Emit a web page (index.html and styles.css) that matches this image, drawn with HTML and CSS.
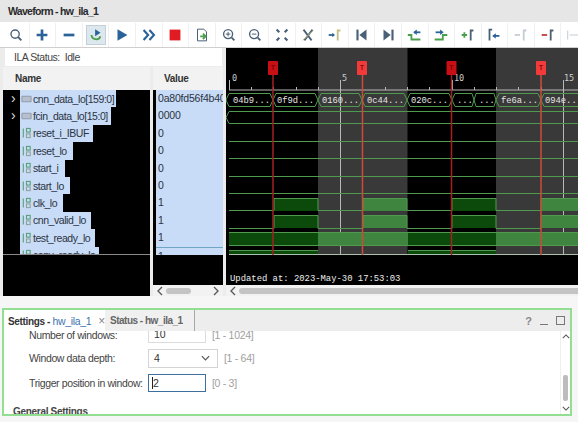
FILE: index.html
```html
<!DOCTYPE html>
<html lang="en">
<head>
<meta charset="utf-8">
<title>Waveform - hw_ila_1</title>
<link rel="stylesheet" href="styles.css">
</head>
<body>
<div class="app">
  <header class="title">Waveform - hw_ila_1</header>
  <div class="toolbar">
    <span class="tool"><svg viewBox="0 0 20 20"><circle cx="9" cy="9" r="4.6" class="s-slate"/><path d="M12.500 12.500L16 16" class="s-slate thick"/></svg></span>
    <span class="tool"><svg viewBox="0 0 20 20"><path d="M10 4v12M4 10h12" class="s-blue heavy"/></svg></span>
    <span class="tool"><svg viewBox="0 0 20 20"><path d="M4 10h12" class="s-blue heavy"/></svg></span>
    <span class="tool selected"><svg viewBox="0 0 20 20"><path d="M5 10a5.200 5.200 0 0 0 10 1.500" class="s-green thick"/><path d="M9 3.500l6 4-6 4z" class="f-blue"/></svg></span>
    <span class="tool"><svg viewBox="0 0 20 20"><path d="M5 3.500l11 6.500-11 6.500z" class="f-blue"/></svg></span>
    <span class="tool"><svg viewBox="0 0 20 20"><path d="M4 4.500l5 5.500-5 5.500M10.500 4.500l5 5.500-5 5.500" class="s-blue wide"/></svg></span>
    <span class="tool"><svg viewBox="0 0 20 20"><rect x="4" y="4" width="12" height="12" class="f-red"/></svg></span>
    <span class="tool"><svg viewBox="0 0 20 20"><path d="M5 3.500h7l3 3v10H5z" class="s-slate thin"/><path d="M8 11.500h4.500M11 8.500l3 3-3 3" class="s-green thick"/></svg></span>
    <span class="tool"><svg viewBox="0 0 20 20"><circle cx="9" cy="9" r="5" class="s-slate"/><path d="M13 13l3 3" class="s-slate thick"/><path d="M6.500 9h5M9 6.500v5" class="s-slate thin"/></svg></span>
    <span class="tool"><svg viewBox="0 0 20 20"><circle cx="9" cy="9" r="5" class="s-slate"/><path d="M13 13l3 3" class="s-slate thick"/><path d="M6.500 9h5" class="s-slate thin"/></svg></span>
    <span class="tool"><svg viewBox="0 0 20 20"><path d="M4 4l3 3M16 4l-3 3M4 16l3-3M16 16l-3-3" class="s-slate wide"/></svg></span>
    <span class="tool"><svg viewBox="0 0 20 20"><path d="M5 4l9 12M15 4L6 16" class="s-slate thick"/><path d="M4 16L16 5" class="s-gold thin"/></svg></span>
    <span class="tool"><svg viewBox="0 0 20 20"><path d="M3 10h5" class="s-blue thick"/><path d="M7 7.500l3 2.500-3 2.500z" class="f-blue"/><path d="M16 5h-3v11" class="s-gold thick"/></svg></span>
    <span class="tool"><svg viewBox="0 0 20 20"><path d="M5 4v12" class="s-slate wide"/><path d="M15 4v12l-8-6z" class="f-slate"/></svg></span>
    <span class="tool"><svg viewBox="0 0 20 20"><path d="M15 4v12" class="s-slate wide"/><path d="M5 4v12l8-6z" class="f-slate"/></svg></span>
    <span class="tool"><svg viewBox="0 0 20 20"><path d="M2 10h4v5h10" class="s-green thick"/><path d="M9 7h7" class="s-blue thick"/><path d="M12 4l-4 3 4 3z" class="f-blue"/></svg></span>
    <span class="tool"><svg viewBox="0 0 20 20"><path d="M3 15h9v-5h5" class="s-green thick"/><path d="M4 7h6" class="s-blue thick"/><path d="M9 4l4 3-4 3z" class="f-blue"/></svg></span>
    <span class="tool"><svg viewBox="0 0 20 20"><path d="M3 10h6M6 7v6" class="s-green thick"/><path d="M16 5h-3v11" class="s-slate thick"/></svg></span>
    <span class="tool"><svg viewBox="0 0 20 20"><path d="M8 4H5v12" class="s-slate thick"/><path d="M9 11h7" class="s-blue thick"/><path d="M12 8l-4 3 4 3z" class="f-blue"/></svg></span>
    <span class="tool"><svg viewBox="0 0 20 20"><path d="M3 10h6" class="s-pale thick"/><path d="M16 5h-3v11" class="s-pale thick"/></svg></span>
    <span class="tool"><svg viewBox="0 0 20 20"><path d="M3 10h6" class="s-red thick"/><path d="M16 5h-3v11" class="s-slate thick"/></svg></span>
    <span class="tool"><svg viewBox="0 0 20 20"><path d="M3 5v10M17 5v10M5 10h10" class="s-pale thin"/></svg></span>
  </div>

  <div class="main">
    <div class="left">
      <div class="status">ILA Status:&nbsp; Idle</div>
      <div class="columns">
        <div class="col-name">
          <div class="col-head">Name</div>
          <div class="tree">
            <div class="row"><span class="chev">&#x203A;</span><span class="sel w115"><svg class="sig" viewBox="0 0 12 12"><path d="M1 3h10v6H1z" class="bus-ico"/></svg>cnn_data_lo[159:0]</span></div>
            <div class="row"><span class="chev">&#x203A;</span><span class="sel w111"><svg class="sig" viewBox="0 0 12 12"><path d="M1 3h10v6H1z" class="bus-ico"/></svg>fcin_data_lo[15:0]</span></div>
            <div class="row"><span class="sel w93"><svg class="sig" viewBox="0 0 12 12"><path d="M2.500 1v10" class="bit-ico"/><rect x="6" y="1" width="4" height="4" class="bit-ico"/><rect x="6" y="7" width="4" height="4" class="bit-ico alt"/></svg>reset_i_IBUF</span></div>
            <div class="row"><span class="sel w73"><svg class="sig" viewBox="0 0 12 12"><path d="M2.500 1v10" class="bit-ico"/><rect x="6" y="1" width="4" height="4" class="bit-ico"/><rect x="6" y="7" width="4" height="4" class="bit-ico alt"/></svg>reset_lo</span></div>
            <div class="row"><span class="sel w65"><svg class="sig" viewBox="0 0 12 12"><path d="M2.500 1v10" class="bit-ico"/><rect x="6" y="1" width="4" height="4" class="bit-ico"/><rect x="6" y="7" width="4" height="4" class="bit-ico alt"/></svg>start_i</span></div>
            <div class="row"><span class="sel w70"><svg class="sig" viewBox="0 0 12 12"><path d="M2.500 1v10" class="bit-ico"/><rect x="6" y="1" width="4" height="4" class="bit-ico"/><rect x="6" y="7" width="4" height="4" class="bit-ico alt"/></svg>start_lo</span></div>
            <div class="row"><span class="sel w63"><svg class="sig" viewBox="0 0 12 12"><path d="M2.500 1v10" class="bit-ico"/><rect x="6" y="1" width="4" height="4" class="bit-ico"/><rect x="6" y="7" width="4" height="4" class="bit-ico alt"/></svg>clk_lo</span></div>
            <div class="row"><span class="sel w91"><svg class="sig" viewBox="0 0 12 12"><path d="M2.500 1v10" class="bit-ico"/><rect x="6" y="1" width="4" height="4" class="bit-ico"/><rect x="6" y="7" width="4" height="4" class="bit-ico alt"/></svg>cnn_valid_lo</span></div>
            <div class="row"><span class="sel w95"><svg class="sig" viewBox="0 0 12 12"><path d="M2.500 1v10" class="bit-ico"/><rect x="6" y="1" width="4" height="4" class="bit-ico"/><rect x="6" y="7" width="4" height="4" class="bit-ico alt"/></svg>test_ready_lo</span></div>
            <div class="row"><span class="sel w99"><svg class="sig" viewBox="0 0 12 12"><path d="M2.500 1v10" class="bit-ico"/><rect x="6" y="1" width="4" height="4" class="bit-ico"/><rect x="6" y="7" width="4" height="4" class="bit-ico alt"/></svg>copy_ready_lo</span></div>
          </div>
          <div class="tree-foot"></div>
        </div>
        <div class="col-value">
          <div class="col-head value-head">Value</div>
          <div class="values">
            <div class="val">0a80fd56f4b40c</div>
            <div class="val">0000</div>
            <div class="val">0</div>
            <div class="val">0</div>
            <div class="val">0</div>
            <div class="val">0</div>
            <div class="val">1</div>
            <div class="val">1</div>
            <div class="val">1</div>
            <div class="val val-last">1</div>
          </div>
          <div class="value-foot"></div>
          <div class="hscroll">
            <svg class="arrow" viewBox="0 0 8 10"><path d="M6 1L2 5l4 4" class="s-dark"/></svg>
            <span class="thumb thumb-short"></span>
            <svg class="arrow end" viewBox="0 0 8 10"><path d="M2 1l4 4-4 4" class="s-dark"/></svg>
          </div>
        </div>
      </div>
    </div>

    <div class="wave">
      <svg class="canvas" viewBox="226 48 352 237" width="352" height="237">
        <rect x="226" y="48" width="352" height="237" fill="#000"/>
        <rect x="318" y="48" width="89.500" height="207" fill="#393939"/>
        <rect x="496" y="48" width="82" height="207" fill="#393939"/>

        <g stroke="#b8b8b8" fill="none">
          <path d="M229 90h349"/>
          <path d="M229.500 80v10M340.500 80v175M563.500 80v175M452.500 80v10"/>
          <path d="M251.500 87v3M273.500 87v3M296.500 87v3M318.500 87v3M385.500 87v3M407.500 87v3M429.500 87v3M474.500 87v3M496.500 87v3M518.500 87v3M541.500 87v3"/>
        </g>
        <g class="ruler">
          <text x="232" y="81">0</text>
          <text x="342" y="81">5</text>
          <text x="454" y="81">10</text>
          <text x="564" y="81">15</text>
        </g>

        <g fill="#0c4a0c">
          <rect x="274" y="198" width="44" height="13"/>
          <rect x="274" y="215" width="44" height="13"/>
          <rect x="452" y="198" width="44" height="13"/>
          <rect x="452" y="215" width="44" height="13"/>
          <rect x="229" y="233" width="89" height="13"/>
          <rect x="408" y="233" width="88" height="13"/>
          <rect x="229" y="250" width="89" height="5"/>
          <rect x="408" y="250" width="88" height="5"/>
        </g>
        <g fill="#3f853f">
          <rect x="363" y="198" width="44" height="13"/>
          <rect x="363" y="215" width="44" height="13"/>
          <rect x="541" y="198" width="37" height="13"/>
          <rect x="541" y="215" width="37" height="13"/>
          <rect x="318" y="233" width="90" height="13"/>
          <rect x="496" y="233" width="82" height="13"/>
        </g>
        <g fill="none" stroke="#4f9a4f">
          <path d="M229 93.500h41l3 6.500-3 6.500h-41l-3-6.500zM276 93.500h39l3 6.500-3 6.500h-39l-3-6.500zM321 93.500h38l3 6.500-3 6.500h-38l-3-6.500zM365 93.500h39l3 6.500-3 6.500h-39l-3-6.500zM410 93.500h39l3 6.500-3 6.500h-39l-3-6.500zM455 93.500h17l2 6.500-2 6.500h-17l-3-6.500zM476 93.500h18l2 6.500-2 6.500h-18l-2-6.500zM499 93.500h39l3 6.500-3 6.500h-39l-3-6.500zM544 93.500h34M544 106.500h34M544 93.500l-3 6.500 3 6.500"/>
          <path d="M229 111.500h349M229 123.500h349M229 111.500l-3 6 3 6"/>
          <path d="M229 141.500h349M229 158.500h349M229 176.500h349M229 193.500h349"/>
          <path d="M229 210.500h45v-12h44v12h45v-12h44v12h45v-12h44v12h45v-12h37"/>
          <path d="M229 228.500h45v-13h44v13h45v-13h44v13h45v-13h44v13h45v-13h37"/>
          <path d="M229 232.500h349M229 245.500h349"/>
          <path d="M229 250.500h89M408 250.500h88"/>
        </g>
        <path d="M229 254.500h349" stroke="#a9c2a9" fill="none"/>

        <g class="buslabel">
          <text x="233" y="103">04b9...</text>
          <text x="277" y="103">0f9d...</text>
          <text x="322" y="103">0160...</text>
          <text x="367" y="103">0c44...</text>
          <text x="411" y="103">020c...</text>
          <text x="457" y="103">...</text>
          <text x="479" y="103">...</text>
          <text x="501" y="103">fe6a...</text>
          <text x="545" y="103">094e...</text>
        </g>

        <g stroke-width="1.500" fill="none">
          <path d="M273 75v180M451.500 75v180" stroke="#a32222"/>
          <path d="M362.500 75v180M541 75v180" stroke="#d04a3a"/>
        </g>
        <rect x="268" y="61" width="10" height="14" rx="1" fill="#c80f16"/>
        <rect x="357" y="61" width="10" height="14" rx="1" fill="#f23a3a"/>
        <rect x="446.500" y="61" width="10" height="14" rx="1" fill="#c80f16"/>
        <rect x="536" y="61" width="10" height="14" rx="1" fill="#f23a3a"/>
        <g class="marker">
          <text x="273" y="70">T</text>
          <text x="362" y="70">T</text>
          <text x="451.500" y="70">T</text>
          <text x="541" y="70">T</text>
        </g>
        <text class="updated" x="230" y="281">Updated at: 2023-May-30 17:53:03</text>
      </svg>
      <div class="hscroll wave-scroll">
        <svg class="arrow" viewBox="0 0 8 10"><path d="M6 1L2 5l4 4" class="s-dark"/></svg>
        <span class="thumb thumb-long"></span>
      </div>
    </div>
  </div>

  <section class="settings">
    <div class="panel">
      <div class="tabs">
        <div class="tab active"><span><b>Settings</b> <b>-</b> <span class="tab-link">hw_ila_1</span></span><span class="close">&#xD7;</span></div>
        <div class="tab other"><b>Status - hw_ila_1</b></div>
        <div class="actions">
          <span class="help">?</span>
          <span class="min"></span>
          <span class="max"></span>
        </div>
      </div>
      <div class="body">
        <div class="form">
          <div class="field first">
            <label class="lbl">Number of windows:</label>
            <span class="input cut">10</span>
            <span class="range">[1 - 1024]</span>
          </div>
          <div class="field second">
            <label class="lbl">Window data depth:</label>
            <span class="select">4<svg class="drop" viewBox="0 0 10 6"><path d="M1 1l4 4 4-4" class="s-dark"/></svg></span>
            <span class="range">[1 - 64]</span>
          </div>
          <div class="field third">
            <label class="lbl">Trigger position in window:</label>
            <span class="input focus"><i class="caret"></i>2</span>
            <span class="range">[0 - 3]</span>
          </div>
          <div class="group">General Settings</div>
        </div>
        <div class="vscroll">
          <svg class="vchev" viewBox="0 0 10 6"><path d="M1 5l4-4 4 4" class="s-dark"/></svg>
          <span class="vthumb"></span>
          <svg class="vchev" viewBox="0 0 10 6"><path d="M1 1l4 4 4-4" class="s-dark"/></svg>
        </div>
      </div>
    </div>
  </section>
</div>
</body>
</html>
```

FILE: styles.css
```css
* { box-sizing: border-box; }
html, body { margin: 0; padding: 0; }
body { width: 578px; height: 422px; overflow: hidden; background: #f6f6f6; font-family: "Liberation Sans", Arial, sans-serif; font-size: 10px; color: #333; }
.app { display: flex; flex-direction: column; width: 578px; height: 422px; overflow: hidden; }

.title { height: 22px; padding: 5px 0 0 8px; background: #e6e6e6; font-weight: bold; font-size: 10.5px; letter-spacing: -0.7px; color: #2a2a2a; }

.toolbar { display: flex; height: 26px; padding: 1px 0 0 3px; background: #fff; border-bottom: 1px solid #cfcfcf; overflow: hidden; }
.tool { flex: none; display: flex; align-items: center; justify-content: center; width: 26.6px; height: 24px; border-right: 1px solid #f0f0f0; }
.tool svg { width: 18px; height: 18px; }
.tool.selected svg { background: #dde7ee; outline: 1px solid #c3d0da; }

.s-slate, .s-blue, .s-green, .s-gold, .s-pale, .s-red, .s-dark { fill: none; stroke-width: 1.5; }
.s-slate { stroke: #4a6077; }
.s-blue { stroke: #2a6399; }
.s-green { stroke: #4a9f4a; }
.s-gold { stroke: #c9bd85; }
.s-pale { stroke: #c4ccd3; }
.s-red { stroke: #c23b3b; }
.s-dark { stroke: #555; stroke-width: 1.3; }
.thin { stroke-width: 1.1; }
.thick { stroke-width: 2; }
.wide { stroke-width: 2.4; }
.heavy { stroke-width: 3; }
.f-blue { fill: #2a6399; }
.f-slate { fill: #4a6077; }
.f-red { fill: #e01b24; }

.main { display: flex; height: 248px; background: #ececec; }
.left { flex: none; width: 226px; display: flex; flex-direction: column; }
.status { flex: none; height: 18px; margin: 0 4px 1px 5px; padding: 3px 0 0 9px; background: #fff; font-size: 10.5px; letter-spacing: -0.45px; color: #444; }
.columns { flex: 1; display: flex; min-height: 0; padding-left: 3px; }

.col-name { flex: none; width: 147px; display: flex; flex-direction: column; margin-right: 3px; }
.col-value { flex: none; width: 70px; display: flex; flex-direction: column; }
.col-head { flex: none; height: 23px; padding: 6px 0 0 12px; background: #f2f2f2; font-weight: bold; font-size: 10px; letter-spacing: -0.3px; color: #333; }
.value-head { padding-left: 11px; }

.tree { flex: none; height: 165px; overflow: hidden; background: #000; border-bottom: 1px solid #8a8a8a; }
.row { position: relative; height: 17.4px; padding-left: 17px; }
.chev { position: absolute; left: 8px; top: 0; color: #ddd; font-size: 14px; line-height: 17px; }
.sel { display: flex; align-items: center; gap: 1px; height: 17.4px; padding-left: 1px; background: #c8dcf8; color: #2c3340; font-size: 10.5px; letter-spacing: -0.45px; white-space: nowrap; overflow: hidden; }
.w115 { width: 96px; }
.w111 { width: 91px; }
.w93 { width: 73px; }
.w73 { width: 53px; }
.w65 { width: 45px; }
.w70 { width: 50px; }
.w63 { width: 43px; }
.w91 { width: 71px; }
.w95 { width: 75px; }
.w99 { width: 79px; }
.sig { flex: none; width: 11px; height: 12px; }
.bus-ico { fill: #b7c0cc; stroke: #8d98a6; }
.bit-ico { fill: none; stroke: #5a9f76; stroke-width: 1.2; }
.bit-ico.alt { stroke: #8fa39a; }
.tree-foot { flex: 1; background: #000; }

.values { flex: none; height: 165px; overflow: hidden; background: #000; padding-left: 3px; }
.val { height: 17.4px; padding-left: 2px; line-height: 17px; background: #c8dcf8; color: #2c3340; font-size: 10.5px; letter-spacing: -0.2px; white-space: nowrap; overflow: hidden; }
.val-last { border-top: 1px solid #6fa6c4; }
.value-foot { flex: none; height: 30px; background: #000; }
.hscroll { flex: none; display: flex; align-items: center; height: 11px; padding: 0 3px; background: #f2f2f2; }
.arrow { flex: none; width: 8px; height: 10px; }
.arrow.end { margin-left: auto; }
.thumb { display: block; height: 6px; margin-left: 2px; border-radius: 3px; background: #c4c4c4; }
.thumb-short { width: 25px; }
.thumb-long { flex: 1; margin-right: -3px; border-radius: 3px 0 0 3px; }

.wave { flex: none; width: 352px; display: flex; flex-direction: column; }
.canvas { display: block; flex: none; }
.wave-scroll { height: 11px; }
.ruler text { fill: #ccc; font-family: "DejaVu Sans Mono", monospace; font-size: 8.5px; }
.buslabel text { fill: #e6e6e6; font-family: "Liberation Mono", monospace; font-size: 8.8px; }
.marker text { fill: #5c0000; font-family: "Liberation Mono", monospace; font-size: 8px; text-anchor: middle; }
.updated { fill: #eee; font-family: "Liberation Mono", monospace; font-size: 8.9px; }

.settings { flex: 1; min-height: 0; padding: 12px 6px 6px 2px; }
.panel { display: flex; flex-direction: column; height: 108px; border: 2px solid #92df92; background: #fff; overflow: hidden; }
.tabs { flex: none; display: flex; height: 21px; background: #ededed; }
.tab { display: flex; align-items: center; height: 21px; font-size: 10px; white-space: pre; }
.tab b { font-weight: bold; }
.active { width: 101px; padding-left: 4px; background: #fff; color: #333; letter-spacing: -0.35px; }
.tab-link { font-size: 10.5px; color: #3f73ae; }
.close { margin-left: 7px; color: #888; font-size: 12px; }
.other { width: 90px; padding-left: 5px; background: #f0f0f0; border-right: 1px solid #a8a8a8; color: #666; letter-spacing: -0.5px; }
.actions { margin-left: auto; display: flex; align-items: center; gap: 8px; padding-right: 5px; }
.help { color: #888; font-weight: bold; font-size: 11px; }
.min { display: block; width: 8px; height: 1px; margin-top: 7px; background: #777; }
.max { display: block; width: 9px; height: 9px; border: 1.500px solid #777; }

.body { flex: 1; display: flex; min-height: 0; }
.form { flex: 1; position: relative; overflow: hidden; padding-left: 25px; }
.field { display: flex; align-items: center; }
.lbl { flex: none; width: 119px; color: #444; font-size: 10.5px; letter-spacing: -0.38px; white-space: nowrap; }
.input, .select { flex: none; display: flex; align-items: center; background: #fff; font-size: 10.5px; letter-spacing: -0.2px; color: #333; }
.first { height: 12px; }
.first .input { width: 58px; height: 18px; margin-top: -6px; padding-left: 5px; border: 1px solid #dcdcdc; border-top: 0; }
.first .lbl { margin-top: -4px; }
.first .range { margin-top: -4px; margin-left: 6px; }
.second { height: 20px; margin-top: 5px; }
.select { width: 70px; height: 19px; padding-left: 5px; border: 1px solid #d4d4d4; }
.drop { width: 9px; height: 6px; margin-left: auto; margin-right: 7px; }
.second .range { margin-left: 6px; }
.third { height: 19px; margin-top: 5px; }
.focus { width: 58px; height: 18px; padding-left: 3px; border: 1px solid #3f6f9e; }
.third .range { margin-left: 6px; }
.caret { display: block; width: 1px; height: 12px; background: #222; }
.range { color: #a0a0a0; font-size: 10.5px; letter-spacing: -0.3px; }
.group { margin: 14px 0 0 -16px; font-weight: bold; font-size: 10px; letter-spacing: -0.3px; color: #444; }

.vscroll { flex: none; width: 10px; display: flex; flex-direction: column; align-items: center; justify-content: space-between; padding: 3px 0; border-left: 1px solid #efefef; }
.vchev { width: 8px; height: 5px; }
.vthumb { display: block; width: 5px; height: 26px; margin-top: 30px; border-radius: 2px; background: #bdbdbd; }
```
